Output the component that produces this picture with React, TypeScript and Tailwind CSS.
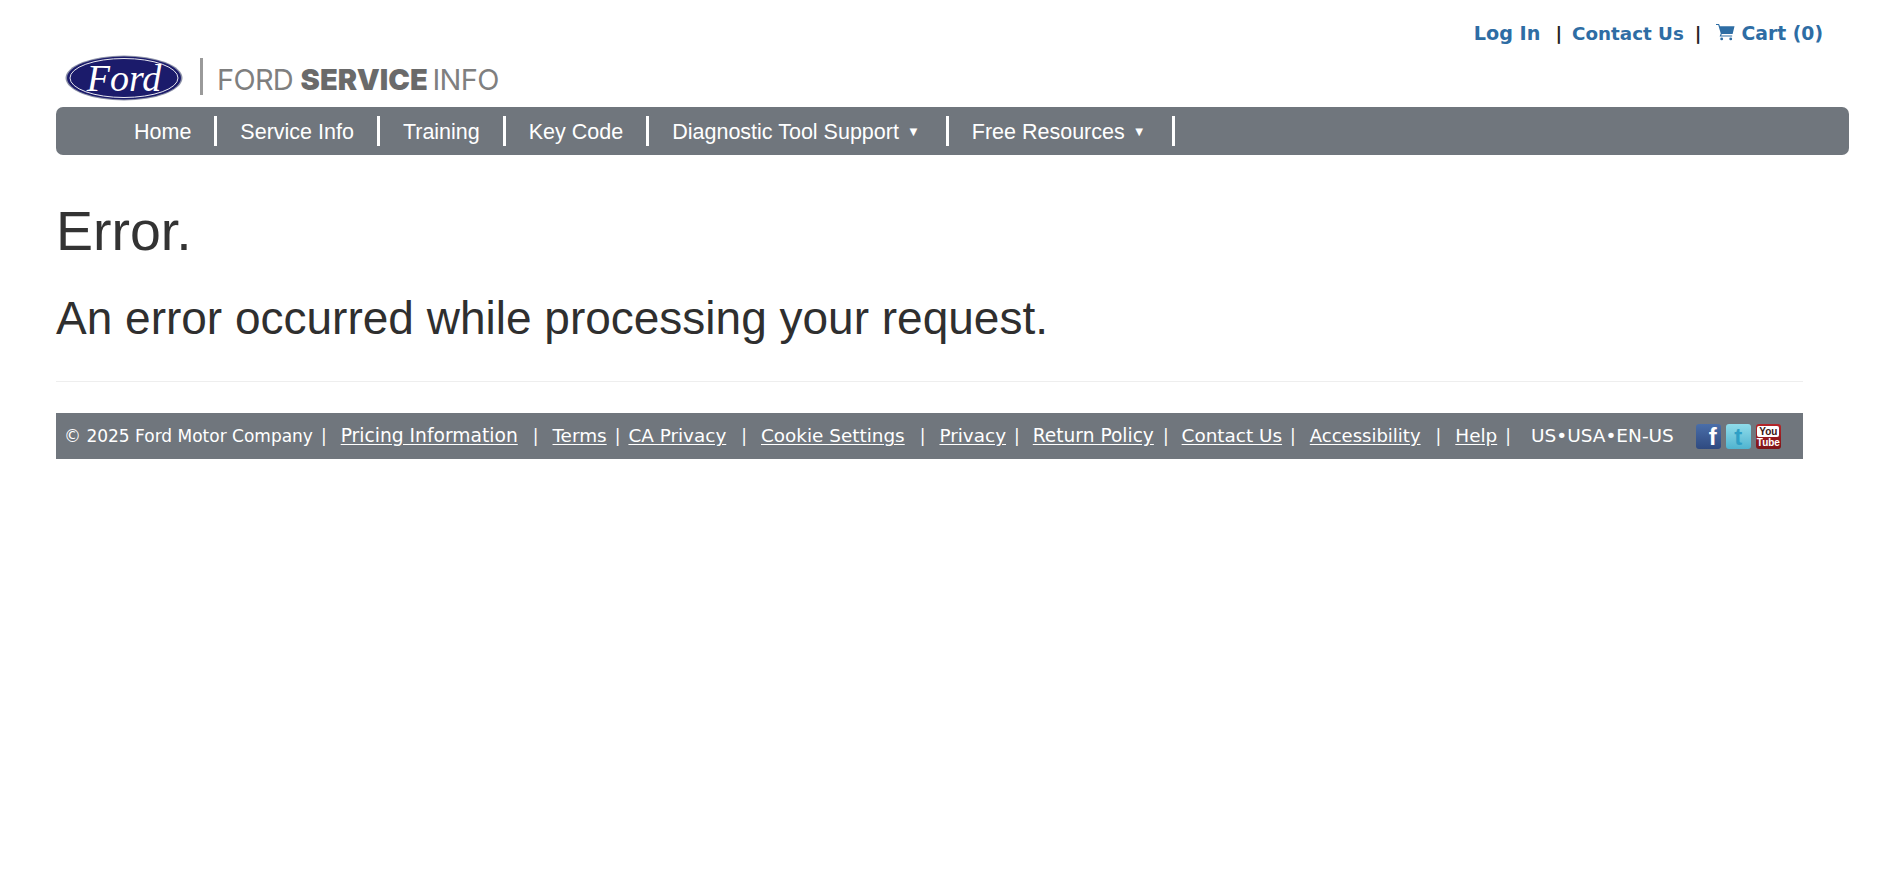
import React from "react";

const navItems = [
  { label: "Home" },
  { label: "Service Info" },
  { label: "Training" },
  { label: "Key Code" },
  { label: "Diagnostic Tool Support", caret: true },
  { label: "Free Resources", caret: true },
];

const FordLogo = () => (
  <div className="flex items-center h-[52px] mb-[3px]">
    <div className="relative w-[118px] h-[46px] ml-[9px]">
      <svg viewBox="0 0 118 46" className="w-[118px] h-[46px]">
        <ellipse cx="59" cy="23" rx="58.5" ry="22.5" fill="#8e93a8" />
        <ellipse cx="59" cy="23" rx="57" ry="21.5" fill="#1b1b6b" />
        <ellipse cx="59" cy="23" rx="54" ry="19.5" fill="none" stroke="#e8e8f0" strokeWidth="1" />
      </svg>
      <span className="absolute inset-0 flex items-center justify-center font-['Liberation_Serif',serif] italic text-[38px] leading-none text-white">
        Ford
      </span>
    </div>
    <div className="w-[3px] h-[37px] bg-[#9a9a9a] ml-[17px] mr-[14px] -mt-[4px]" />
    <div className="mt-[3px] font-['Inter',sans-serif] text-[29px] leading-none tracking-[-0.7px] text-[#7f7f7f] whitespace-nowrap">
      FORD <span className="font-black tracking-[0.1px] text-[#6a6a6a]">SERVICE</span> <span className="-ml-[3px]">INFO</span>
    </div>
  </div>
);

const Cart = () => (
  <svg viewBox="0 0 20 18" className="w-[19px] h-[18px] self-center mb-[4px]" fill="#2e6da4">
    <path d="M0 0.5h3.2l1 2.5h15.3l-2 8H6l-.5 1.6H17v1.2H3.8l1.2-3.2L2.4 1.7H0z" />
    <circle cx="6" cy="16.3" r="1.5" />
    <circle cx="15.5" cy="16.3" r="1.5" />
  </svg>
);

const FooterLink = ({ children, className }: { children: React.ReactNode; className?: string }) => (
  <a className={`underline underline-offset-2 ${className || "text-[18.4px]"}`}>{children}</a>
);

const Social = () => (
  <div className="flex items-center self-center gap-[5px] ml-[22px] mt-[1px] font-['Liberation_Sans',sans-serif] font-bold">
    <div className="flex justify-end w-[25px] h-[25px] pr-[4px] rounded-[3px] bg-gradient-to-b from-[#4a6ea9] to-[#2f4a80]">
      <span className="text-[24px] leading-[25px] text-white">f</span>
    </div>
    <div className="flex justify-center w-[25px] h-[25px] rounded-[3px] bg-gradient-to-b from-[#8fdcea] to-[#4fb4d0]">
      <span className="text-[24px] leading-[25px] text-[#2f9fc6]">t</span>
    </div>
    <div className="flex flex-col items-center justify-center w-[25px] h-[25px] rounded-[3px] bg-gradient-to-b from-[#b5262a] to-[#7e1418]">
      <span className="px-[2px] rounded-[2px] bg-white text-[10px] leading-[11px] text-[#3a1414]">You</span>
      <span className="text-[10px] leading-[11px] text-white">Tube</span>
    </div>
  </div>
);

export default function App() {
  return (
    <div className="min-h-[883px] bg-white pl-[56px] pr-[51px]">
      <div className="flex justify-end items-baseline h-[52px] pt-[20px] pr-[26px] font-['DejaVu_Sans',sans-serif] font-bold text-[18.3px] text-[#2e6da4]">
        <a className="text-[19.2px]">Log In</a>
        <span className="text-[#222222] ml-[15px] mr-[10px]">|</span>
        <a>Contact Us</a>
        <span className="text-[#222222] ml-[11px] mr-[14px]">|</span>
        <span className="flex items-baseline gap-[7px]">
          <Cart />
          <a className="text-[18.8px]">Cart (0)</a>
        </span>
      </div>
      <FordLogo />

      <nav className="flex items-center h-[48px] rounded-[7px] bg-[#70767d] pl-[78px] font-['Liberation_Sans',sans-serif] text-[21.5px] text-white">
        {navItems.map((item) => (
          <React.Fragment key={item.label}>
            <a className="flex items-center pt-[2px] whitespace-nowrap">
              {item.label}
              {item.caret && <span className="ml-[8px] text-[13px]">▼</span>}
            </a>
            <div className={`w-[3px] h-[30px] bg-white ${item.caret ? "ml-[26px]" : "ml-[23px]"} mr-[23px]`} />
          </React.Fragment>
        ))}
      </nav>

      <h1 className="mt-[44px] font-['Liberation_Sans',sans-serif] text-[55.5px] leading-[64px] text-[#333333]">Error.</h1>
      <h2 className="mt-[26px] font-['Liberation_Sans',sans-serif] text-[46px] leading-[58px] text-[#2f2f2f]">
        An error occurred while processing your request.
      </h2>

      <div className="w-[1747px] mt-[34px] border-t border-[#eeeeee]" />

      <footer className="flex items-baseline w-[1747px] h-[46px] mt-[31px] px-[8px] bg-[#70767d] font-['DejaVu_Sans',sans-serif] text-[17px] leading-[46px] text-white whitespace-nowrap">
        <span>© 2025 Ford Motor Company</span>
        <span className="ml-[8px] mr-[14px]">|</span>
        <FooterLink className="text-[18.7px]">Pricing Information</FooterLink>
        <span className="ml-[15px] mr-[14px]">|</span>
        <FooterLink>Terms</FooterLink>
        <span className="ml-[8px] mr-[8px]">|</span>
        <FooterLink>CA Privacy</FooterLink>
        <span className="ml-[15px] mr-[14px]">|</span>
        <FooterLink>Cookie Settings</FooterLink>
        <span className="ml-[15px] mr-[14px]">|</span>
        <FooterLink>Privacy</FooterLink>
        <span className="ml-[8px] mr-[13px]">|</span>
        <FooterLink className="text-[18.6px]">Return Policy</FooterLink>
        <span className="ml-[9px] mr-[13px]">|</span>
        <FooterLink>Contact Us</FooterLink>
        <span className="ml-[8px] mr-[14px]">|</span>
        <FooterLink className="text-[18px]">Accessibility</FooterLink>
        <span className="ml-[15px] mr-[14px]">|</span>
        <FooterLink>Help</FooterLink>
        <span className="ml-[8px] mr-[20px]">|</span>
        <span className="text-[18.5px]">US•USA•EN-US</span>
        <Social />
      </footer>
    </div>
  );
}
